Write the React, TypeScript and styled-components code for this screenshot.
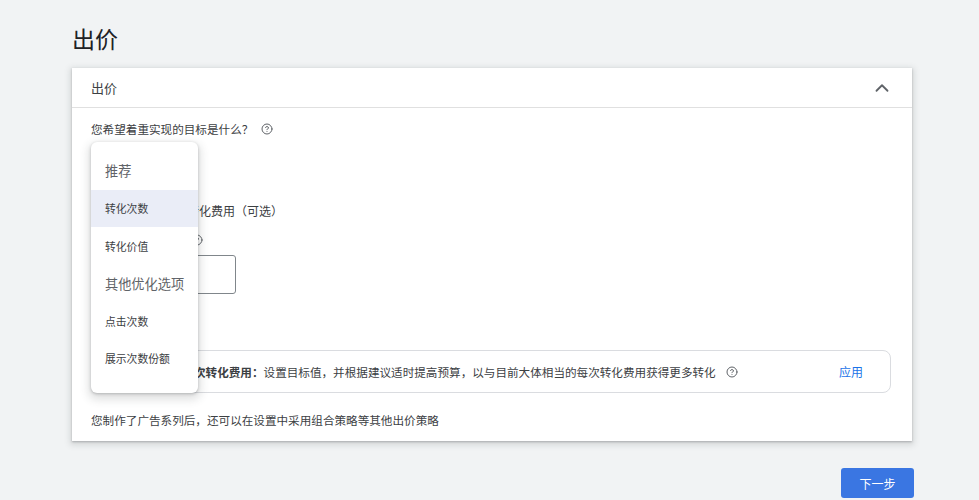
import React from 'react';
import styled, { createGlobalStyle } from 'styled-components';
import { ChevronUp, CircleHelp, Lightbulb } from 'lucide-react';

const GlobalStyle = createGlobalStyle`
  html, body {
    margin: 0;
    background: #f1f3f4;
    font-family: "Noto Sans CJK SC", "Noto Sans", Roboto, sans-serif;
    color: #3c4043;
  }
`;

const Page = styled.div`
  width: 914px;
  padding: 22px 0 0 72px;
  height: 500px;
  box-sizing: border-box;
`;

const Title = styled.h1`
  margin: 0;
  font-size: 23px;
  line-height: 32px;
  font-weight: 400;
  color: #202124;
`;

const Card = styled.section`
  width: 840px;
  margin-top: 14px;
  background: #fff;
  box-shadow: 0 1px 2px rgba(60, 64, 67, 0.3), 0 2px 6px 2px rgba(60, 64, 67, 0.15);
`;

const CardHeader = styled.div`
  height: 39px;
  display: flex;
  align-items: center;
  justify-content: space-between;
  padding: 0 19px 0 19px;
  border-bottom: 1px solid #e0e0e0;
  font-size: 13px;
  color: #3c4043;
`;

const CardBody = styled.div`
  position: relative;
  padding: 13px 21px 13px 19px;
`;

const Question = styled.div`
  display: flex;
  align-items: center;
  gap: 8px;
  font-size: 11.6px;
  line-height: 16px;
  color: #3c4043;
`;

const Help = styled(CircleHelp)`
  color: #5f6368;
  flex: none;
`;

const CheckRow = styled.label`
  display: flex;
  align-items: center;
  gap: 10px;
  margin-top: 66px;
  font-size: 12px;
  line-height: 16px;
`;

const Box = styled.span`
  width: 14px;
  height: 14px;
  border: 2px solid #5f6368;
  border-radius: 2px;
  box-sizing: border-box;
`;

const FieldLabel = styled.div`
  display: flex;
  align-items: center;
  gap: 4px;
  margin-top: 13px;
  font-size: 12px;
  line-height: 16px;
`;

const Input = styled.div`
  width: 145px;
  height: 39px;
  margin-top: 7px;
  border: 1px solid #80868b;
  border-radius: 3px;
  box-sizing: border-box;
`;

const Suggestion = styled.div`
  margin-top: 56px;
  height: 41px;
  display: flex;
  align-items: center;
  padding: 0 27px 0 16px;
  border: 1px solid #dadce0;
  border-radius: 8px;
  font-size: 11.6px;
  line-height: 16px;
  color: #3c4043;
`;

const SuggestionText = styled.div`
  flex: 1;
  display: flex;
  align-items: center;
  gap: 10px;
  white-space: nowrap;
  b {
    font-weight: 700;
  }
`;

const Apply = styled.span`
  color: #1a73e8;
  font-size: 12px;
`;

const Footnote = styled.div`
  margin-top: 19px;
  font-size: 11.6px;
  line-height: 16px;
  color: #3c4043;
`;

const Menu = styled.ul`
  position: absolute;
  left: 19px;
  top: 34px;
  width: 107px;
  margin: 0;
  padding: 10px 0 16px;
  list-style: none;
  background: #fff;
  border-radius: 6px;
  box-shadow: 0 1px 3px rgba(60, 64, 67, 0.3), 0 4px 8px 3px rgba(60, 64, 67, 0.15);
`;

const MenuItem = styled.li<{ $header?: boolean; $selected?: boolean }>`
  height: 37.5px;
  display: flex;
  align-items: center;
  padding-left: 14px;
  font-size: ${p => (p.$header ? '13.2px' : '10.8px')};
  color: ${p => (p.$header ? '#5f6368' : '#3c4043')};
  background: ${p => (p.$selected ? '#eaedf7' : 'transparent')};
`;

const Actions = styled.div`
  display: flex;
  justify-content: flex-end;
  margin-top: 27px;
`;

const NextButton = styled.button`
  width: 73px;
  height: 30px;
  border: 0;
  border-radius: 3px;
  background: #3a76e2;
  color: #fff;
  font-family: inherit;
  font-size: 12px;
`;

const options = [
  { label: '推荐', header: true },
  { label: '转化次数', selected: true },
  { label: '转化价值' },
  { label: '其他优化选项', header: true },
  { label: '点击次数' },
  { label: '展示次数份额' },
];

export default function App() {
  return (
    <>
      <GlobalStyle />
      <Page>
        <Title>出价</Title>
        <Card>
          <CardHeader>
            出价
            <ChevronUp size={22} strokeWidth={2} color="#5f6368" />
          </CardHeader>
          <CardBody>
            <Question>
              您希望着重实现的目标是什么？
              <Help size={12} strokeWidth={2} />
            </Question>
            <CheckRow>
              <Box />
              设置目标每次转化费用（可选）
            </CheckRow>
            <FieldLabel>
              目标每次转化费用
              <Help size={12} strokeWidth={2} />
            </FieldLabel>
            <Input />
            <Suggestion>
              <SuggestionText>
                <Lightbulb size={18} color="#5f6368" />
                <span>
                  <b>采用目标每次转化费用：</b>设置目标值，并根据建议适时提高预算，以与目前大体相当的每次转化费用获得更多转化
                </span>
                <Help size={12} strokeWidth={2} />
              </SuggestionText>
              <Apply>应用</Apply>
            </Suggestion>
            <Footnote>您制作了广告系列后，还可以在设置中采用组合策略等其他出价策略</Footnote>
            <Menu>
              {options.map(o => (
                <MenuItem key={o.label} $header={o.header} $selected={o.selected}>
                  {o.label}
                </MenuItem>
              ))}
            </Menu>
          </CardBody>
        </Card>
        <Actions>
          <NextButton type="button">下一步</NextButton>
        </Actions>
      </Page>
    </>
  );
}
